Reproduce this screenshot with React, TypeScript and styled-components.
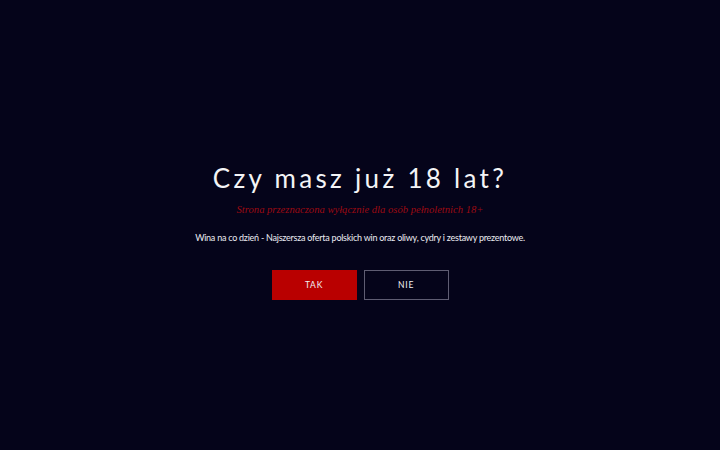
import styled, { createGlobalStyle } from "styled-components";

const GlobalStyle = createGlobalStyle`
  html, body {
    margin: 0;
    padding: 0;
    background: #05041a;
  }
`;

const Screen = styled.div`
  width: 720px;
  height: 450px;
  background: #05041a;
  display: flex;
  flex-direction: column;
  align-items: center;
  padding-top: 162px;
  box-sizing: border-box;
  font-family: "Lato", "Open Sans", sans-serif;
`;

const Title = styled.h1`
  margin: 0;
  color: #f4f4f6;
  font-family: "Lato", sans-serif;
  font-weight: 400;
  font-size: 26px;
  letter-spacing: 3.3px;
  line-height: 32px;
`;

const Subtitle = styled.p`
  margin: 9px 0 0;
  color: #9c0a12;
  font-family: "Liberation Serif", serif;
  font-style: italic;
  font-size: 10.6px;
  line-height: 13px;
`;

const Description = styled.p`
  margin: 16px 0 0;
  color: #ececf2;
  font-size: 9px;
  letter-spacing: -0.25px;
  line-height: 12px;
`;

const Buttons = styled.div`
  display: flex;
  gap: 7px;
  margin-top: 26px;
`;

type ButtonProps = { $primary?: boolean };

const Button = styled.button<ButtonProps>`
  width: 85px;
  height: 30px;
  box-sizing: border-box;
  border: 1px solid ${(p) => (p.$primary ? "#b90000" : "#5f5d72")};
  background: ${(p) => (p.$primary ? "#b90000" : "transparent")};
  color: #f0f0f4;
  font-family: "Lato", sans-serif;
  font-size: 8.5px;
  letter-spacing: 0.8px;
  cursor: pointer;
`;

export default function App() {
  return (
    <>
      <GlobalStyle />
      <Screen>
        <Title>Czy masz już 18 lat?</Title>
        <Subtitle>Strona przeznaczona wyłącznie dla osób pełnoletnich 18+</Subtitle>
        <Description>
          Wina na co dzień - Najszersza oferta polskich win oraz oliwy, cydry i zestawy prezentowe.
        </Description>
        <Buttons>
          <Button $primary>TAK</Button>
          <Button>NIE</Button>
        </Buttons>
      </Screen>
    </>
  );
}
